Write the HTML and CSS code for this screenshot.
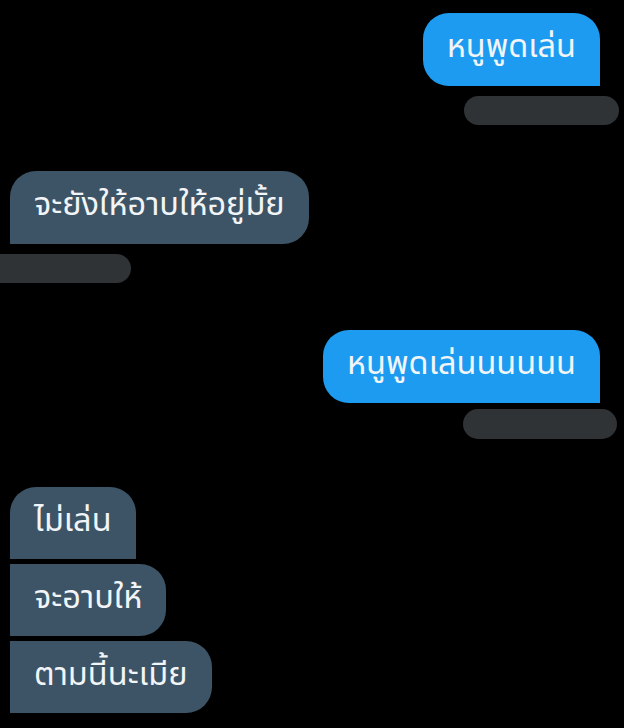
FILE: index.html
```html
<!DOCTYPE html>
<html lang="th">
<head>
<meta charset="utf-8">
<link rel="stylesheet" href="styles.css">
</head>
<body>
<main class="chat">
  <section class="msg msg--sent">
    <div class="bubble bubble--sent">หนูพูดเล่น</div>
    <div class="meta meta--sent"></div>
  </section>
  <section class="msg msg--recv">
    <div class="bubble bubble--recv">จะยังให้อาบให้อยู่มั้ย</div>
    <div class="meta meta--recv"></div>
  </section>
  <section class="msg msg--sent msg--third">
    <div class="bubble bubble--sent">หนูพูดเล่นนนนนน</div>
    <div class="meta meta--sent meta--sent2"></div>
  </section>
  <section class="msg msg--recv group">
    <div class="bubble bubble--recv first">ไม่เล่น</div>
    <div class="bubble bubble--recv mid">จะอาบให้</div>
    <div class="bubble bubble--recv last">ตามนี้นะเมีย</div>
  </section>
</main>
</body>
</html>
```
FILE: styles.css
```css
html, body {
  margin: 0;
  padding: 0;
  background: #000;
  width: 624px;
  height: 728px;
  overflow: hidden;
}
.chat {
  display: flex;
  flex-direction: column;
  padding-top: 13px;
  font-family: "Noto Sans Thai", "Noto Sans", "DejaVu Sans", sans-serif;
}
.msg {
  display: flex;
  flex-direction: column;
}
.msg--sent {
  align-items: flex-end;
}
.msg--recv {
  align-items: flex-start;
}
.msg + .msg {
  margin-top: 46px;
}
.msg.msg--third {
  margin-top: 47px;
}
.msg.group {
  margin-top: 48px;
}
.bubble {
  height: 73px;
  display: flex;
  align-items: center;
  padding: 0 24px 2px;
  color: #f2f5f7;
  font-size: 32.5px;
  line-height: 1;
  box-sizing: border-box;
  white-space: nowrap;
}
.bubble--sent {
  background: #1d9bf0;
  border-radius: 26px 26px 0 26px;
  margin-right: 24px;
}
.bubble--recv {
  background: #3d5466;
  border-radius: 26px 26px 26px 0;
  margin-left: 10px;
}
.meta {
  height: 29px;
  border-radius: 15px;
  background: #2f3336;
}
.meta--sent {
  width: 155px;
  margin-top: 10px;
  margin-right: 5px;
}
.meta--sent2 {
  height: 30px;
  width: 154px;
  margin-top: 6px;
  margin-right: 7px;
}
.meta--recv {
  width: 146px;
  margin-top: 10px;
  margin-left: -15px;
}
.group .bubble {
  height: 72px;
}
.group .bubble + .bubble {
  margin-top: 5px;
}
.group .first {
  border-radius: 26px 26px 0 0;
}
.group .mid {
  border-radius: 0 26px 26px 0;
}
.group .last {
  border-radius: 0 26px 26px 0;
}
```
